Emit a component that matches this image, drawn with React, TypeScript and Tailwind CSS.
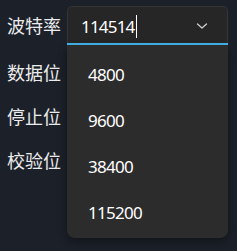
const labels = ["数据位", "停止位", "校验位"];
const options = ["4800", "9600", "38400", "115200"];

function Chevron() {
  return (
    <svg width="12" height="8" viewBox="0 0 12 8" fill="none">
      <path d="M1.5 2 L6 6 L10.5 2" stroke="#cfcfcf" strokeWidth="1.3" strokeLinecap="round" strokeLinejoin="round" />
    </svg>
  );
}

export default function App() {
  return (
    <div
      className="relative w-[237px] h-[251px] overflow-hidden bg-[#1b2029] text-[#ececec]"
      style={{ fontFamily: '"Noto Sans", "Noto Sans CJK SC", sans-serif' }}
    >
      <div className="flex flex-col pt-[6px]">
        <div className="flex items-center h-[39px]">
          <span className="w-[67px] pl-[7px] text-[18px] leading-none">波特率</span>
          <div className="relative flex items-center w-[161px] h-[39px] rounded-t-[5px] border border-b-0 border-[#353535] bg-[#262626]">
            <span className="pl-[13px] text-[17px] leading-none tracking-[-0.8px] text-white">114514</span>
            <span className="ml-px w-px h-[23px] bg-white" />
            <span className="ml-auto mr-[19px] flex items-center">
              <Chevron />
            </span>
            <div className="absolute left-[-1px] right-[-1px] bottom-0 h-[2px] bg-[#43b4ec]" />
          </div>
        </div>
        <div className="flex flex-col mt-[6px]">
          {labels.map((l) => (
            <div key={l} className="flex items-center h-[44px] pl-[7px] text-[18px] leading-none">
              {l}
            </div>
          ))}
        </div>
      </div>

      <div className="absolute left-[67px] top-[45px] w-[161px] h-[193px] rounded-b-[8px] bg-[#2c2c2c] shadow-[0_4px_8px_rgba(0,0,0,0.35)] pt-[6px]">
        {options.map((o) => (
          <div key={o} className="flex items-center h-[46px] pl-[21px] text-[17px] leading-none tracking-[-0.7px] text-white">
            {o}
          </div>
        ))}
      </div>
    </div>
  );
}
